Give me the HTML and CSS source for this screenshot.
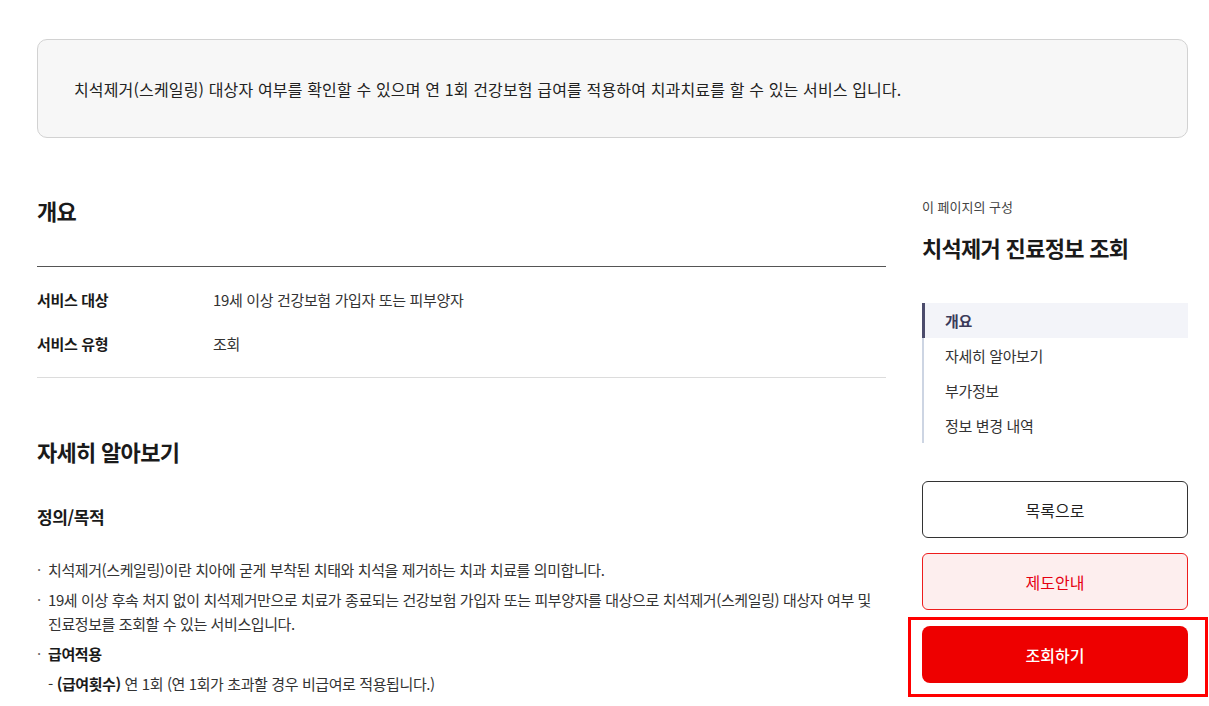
FILE: index.html
```html
<!DOCTYPE html>
<html lang="ko">
<head>
<meta charset="utf-8">
<title>치석제거 진료정보 조회</title>
<link rel="stylesheet" href="styles.css">
</head>
<body>
<div class="page">
  <div class="summary">
    <p>치석제거(스케일링) 대상자 여부를 확인할 수 있으며 연 1회 건강보험 급여를 적용하여 치과치료를 할 수 있는 서비스 입니다.</p>
  </div>
  <div class="layout">
    <main class="main">
      <h2 class="h-section first">개요</h2>
      <div class="info">
        <div class="info-row"><span class="info-key">서비스 대상</span><span class="info-val">19세 이상 건강보험 가입자 또는 피부양자</span></div>
        <div class="info-row"><span class="info-key">서비스 유형</span><span class="info-val">조회</span></div>
      </div>
      <h2 class="h-section">자세히 알아보기</h2>
      <h3 class="h-sub">정의/목적</h3>
      <ul class="bullets">
        <li>치석제거(스케일링)이란 치아에 굳게 부착된 치태와 치석을 제거하는 치과 치료를 의미합니다.</li>
        <li>19세 이상 후속 처지 없이 치석제거만으로 치료가 종료되는 건강보험 가입자 또는 피부양자를 대상으로 치석제거(스케일링) 대상자 여부 및 진료정보를 조회할 수 있는 서비스입니다.</li>
        <li><strong>급여적용</strong>
          <div class="dash">- <strong>(급여횟수)</strong> 연 1회 (연 1회가 초과할 경우 비급여로 적용됩니다.)</div>
        </li>
      </ul>
    </main>
    <aside class="side">
      <p class="side-label">이 페이지의 구성</p>
      <h2 class="side-title">치석제거 진료정보 조회</h2>
      <nav class="toc">
        <a class="toc-item active">개요</a>
        <a class="toc-item">자세히 알아보기</a>
        <a class="toc-item">부가정보</a>
        <a class="toc-item">정보 변경 내역</a>
      </nav>
      <div class="actions">
        <button class="btn btn-line">목록으로</button>
        <button class="btn btn-soft">제도안내</button>
        <div class="highlight-wrap">
          <button class="btn btn-primary">조회하기</button>
          <span class="highlight"></span>
        </div>
      </div>
    </aside>
  </div>
</div>
</body>
</html>
```
FILE: styles.css
```css
* { box-sizing: border-box; }
html, body { margin: 0; padding: 0; background: #fff; }
body {
  font-family: "Noto Sans CJK KR", "Noto Sans", sans-serif;
  color: #222;
  overflow: hidden;
}
.page {
  width: 1151px;
  margin-left: 37px;
  padding-top: 39px;
}
.summary {
  height: 99px;
  background: #f7f7f7;
  border: 1px solid #d2d2d2;
  border-radius: 10px;
  display: flex;
  align-items: center;
  padding: 0 36px;
}
.summary p {
  margin: 0;
  font-size: 16px;
  line-height: 24px;
  letter-spacing: 0.15px;
  color: #222;
}
.layout {
  display: flex;
  gap: 36px;
}
.main { width: 849px; }
.side { width: 266px; }

.h-section {
  margin: 58px 0 0;
  font-size: 22px;
  line-height: 30px;
  font-weight: 700;
  letter-spacing: -0.7px;
  color: #1a1a1a;
}
.h-section.first { margin-top: 57px; }
.info {
  margin-top: 41px;
  border-top: 1px solid #555;
  border-bottom: 1px solid #dcdcdc;
  padding: 10px 0 12px;
}
.info-row {
  display: flex;
  height: 44px;
  align-items: center;
  font-size: 15px;
  letter-spacing: -0.35px;
}
.info-key {
  width: 176px;
  font-weight: 700;
  color: #1a1a1a;
}
.info-val { color: #333; }

.h-sub {
  margin: 39px 0 0;
  font-size: 17px;
  line-height: 24px;
  font-weight: 700;
  letter-spacing: -0.4px;
  color: #1a1a1a;
}
.bullets {
  list-style: none;
  margin: 29px 0 0;
  padding: 0;
  font-size: 15px;
  line-height: 24px;
  letter-spacing: -0.4px;
  color: #333;
}
.bullets li {
  position: relative;
  padding-left: 11px;
  margin-bottom: 6px;
}
.bullets li::before {
  content: "·";
  position: absolute;
  left: 0;
  top: 0;
  color: #666;
}
.bullets strong { color: #1a1a1a; }
.dash { margin-top: 6px; }

.side-label {
  margin: 60px 0 0;
  font-size: 13px;
  line-height: 18px;
  color: #444;
}
.side-title {
  margin: 16px 0 0;
  font-size: 22px;
  line-height: 30px;
  font-weight: 700;
  letter-spacing: -0.7px;
  color: #1a1a1a;
}
.toc {
  margin-top: 41px;
  display: flex;
  flex-direction: column;
  border-left: 2px solid #cdd5e3;
}
.toc-item {
  height: 35px;
  display: flex;
  align-items: center;
  padding-left: 20px;
  font-size: 15px;
  letter-spacing: -0.35px;
  color: #333;
  margin-left: -2px;
  border-left: 3px solid transparent;
}
.toc-item.active {
  background: #f3f4f9;
  border-left-color: #4c4c6c;
  font-weight: 700;
  color: #3a3a5a;
}
.actions {
  margin-top: 38px;
  display: flex;
  flex-direction: column;
  gap: 15px;
}
.btn {
  display: block;
  width: 100%;
  height: 57px;
  font-family: inherit;
  font-size: 16px;
  border-radius: 6px;
  cursor: pointer;
}
.btn-line {
  background: #fff;
  border: 1px solid #333;
  color: #222;
}
.btn-soft {
  background: #fdeeee;
  border: 1px solid #ee1c1c;
  color: #e60012;
}
.highlight-wrap {
  position: relative;
  margin-top: 1px;
}
.btn-primary {
  background: #ee0000;
  border: none;
  color: #fff;
  font-weight: 500;
  border-radius: 8px;
}
.highlight {
  position: absolute;
  top: -9px;
  left: -14px;
  right: -20px;
  bottom: -14px;
  border: 3px solid #ff0000;
  pointer-events: none;
}
```
